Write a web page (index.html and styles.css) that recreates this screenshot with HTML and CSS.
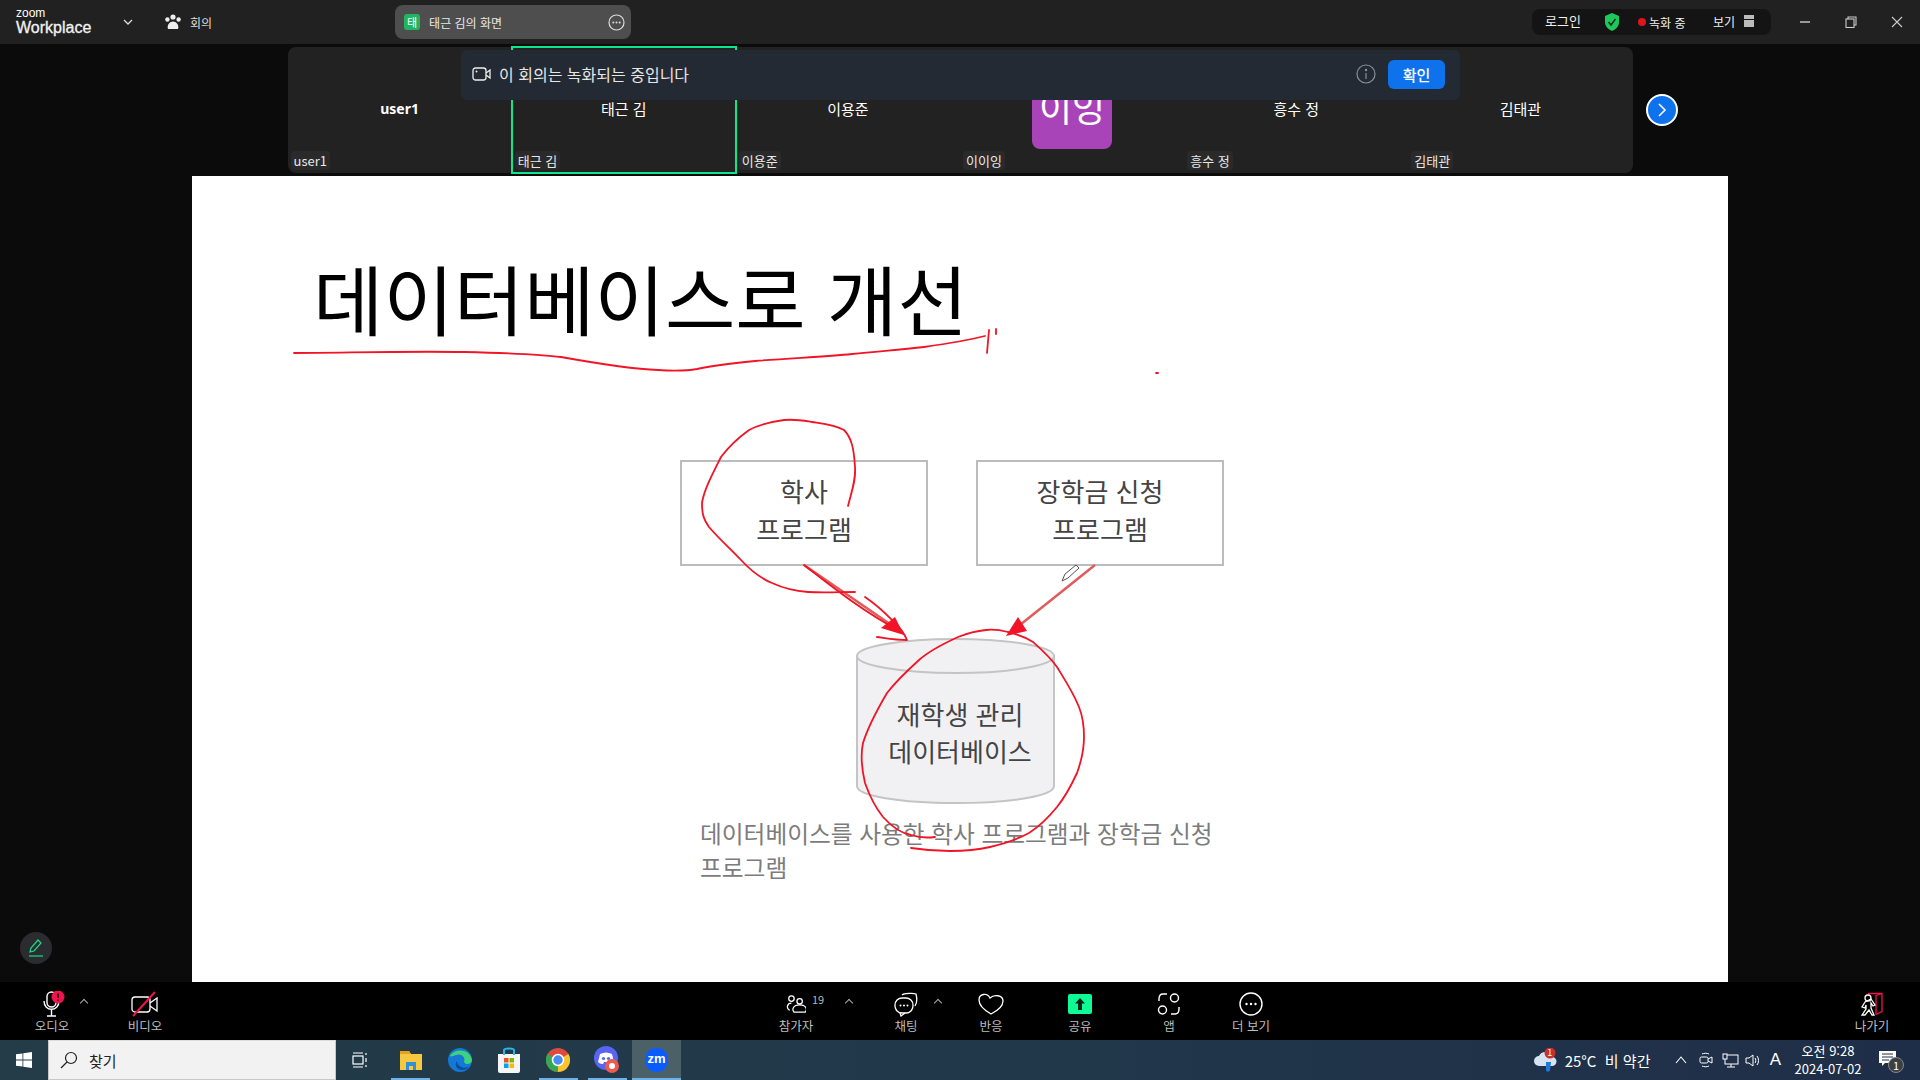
FILE: index.html
```html
<!DOCTYPE html>
<html lang="ko">
<head>
    <meta charset="UTF-8">
    <meta name="viewport" content="width=device-width, initial-scale=1.0">
    <title>Zoom Workplace - 회의</title>
    <link rel="stylesheet" href="styles.css">
</head>
<body>
    <header class="topbar">
        <div class="logo">
            <span class="logo-small">zoom</span>
            <span class="logo-big">Workplace</span>
        </div>
        <svg class="logo-chevron" width="10" height="6" viewBox="0 0 10 6"><path d="M1 1l4 4 4-4" fill="none" stroke="#ddd" stroke-width="1.3"/></svg>
        <div class="meeting">
            <svg width="18" height="16" viewBox="0 0 18 16" fill="#eee"><circle cx="9" cy="3" r="2.6"/><circle cx="3.4" cy="5.5" r="2.2"/><circle cx="14.6" cy="5.5" r="2.2"/><path d="M4 15c-1.5-4 2-7.5 5-7.5s6.500 3.500 5 7.500z"/></svg>
            <span>회의</span>
        </div>
        <div class="share-tab">
            <span class="share-badge">태</span>
            <span class="share-name">태근 김의 화면</span>
            <svg width="17" height="17" viewBox="0 0 17 17"><circle cx="8.500" cy="8.500" r="7.500" fill="none" stroke="#ddd" stroke-width="1.2"/><circle cx="5.300" cy="8.500" r="1" fill="#ddd"/><circle cx="8.500" cy="8.500" r="1" fill="#ddd"/><circle cx="11.700" cy="8.500" r="1" fill="#ddd"/></svg>
        </div>
        <div class="status-pill">
            <span class="status-login">로그인</span>
            <svg width="18" height="20" viewBox="0 0 18 20"><path d="M9 1l7 3v6c0 4-3 7.500-7 9-4-1.500-7-5-7-9V4z" fill="#1ec95c"/><path d="M5.500 10l2.500 3 4.500-6" fill="none" stroke="#10301c" stroke-width="1.600"/></svg>
            <span class="status-rec"><i class="rec-dot"></i>녹화 중</span>
            <span class="status-view">보기
                <svg width="12" height="12" viewBox="0 0 12 12" fill="#bbb"><rect x="1" y="0" width="10" height="4"/><rect x="1" y="5" width="10" height="7"/></svg>
            </span>
        </div>
        <div class="win-controls">
            <svg width="12" height="12" viewBox="0 0 12 12"><path d="M1 6h10" stroke="#ccc" stroke-width="1.400"/></svg>
            <svg width="12" height="12" viewBox="0 0 12 12" fill="none" stroke="#ccc" stroke-width="1.100"><rect x="1" y="3" width="8" height="8.500"/><path d="M3 3V1h8v8H9"/></svg>
            <svg width="12" height="12" viewBox="0 0 12 12"><path d="M1 1l10 10M11 1L1 11" stroke="#ccc" stroke-width="1.100"/></svg>
        </div>
    </header>

    <main class="stage">
        <section class="filmstrip">
            <div class="tile tile-me"><span class="tile-name">user1</span><span class="tile-label">user1</span></div>
            <div class="tile tile-active"><span class="tile-name">태근 김</span><span class="tile-label">태근 김</span></div>
            <div class="tile"><span class="tile-name">이용준</span><span class="tile-label">이용준</span></div>
            <div class="tile"><div class="avatar">이잉</div><span class="tile-label">이이잉</span></div>
            <div class="tile"><span class="tile-name">흥수 정</span><span class="tile-label">흥수 정</span></div>
            <div class="tile"><span class="tile-name">김태관</span><span class="tile-label">김태관</span></div>
        </section>

        <div class="notice">
            <svg width="20" height="14" viewBox="0 0 20 14" fill="none" stroke="#eee" stroke-width="1.300"><rect x="1" y="1" width="13" height="12" rx="2.500"/><circle cx="4.500" cy="4.500" r="1" fill="#eee" stroke="none"/><path d="M14 6l4-3v8l-4-3"/></svg>
            <span class="notice-text">이 회의는 녹화되는 중입니다</span>
            <svg class="notice-info" width="20" height="20" viewBox="0 0 20 20" fill="none" stroke="#8b8f96" stroke-width="1.200"><circle cx="10" cy="10" r="9"/><path d="M10 9v6"/><circle cx="10" cy="6" r=".6"/></svg>
            <button class="notice-btn">확인</button>
        </div>

        <button class="next-btn">
            <svg width="12" height="16" viewBox="0 0 12 16"><path d="M3 2l6 6-6 6" fill="none" stroke="#fff" stroke-width="1.600"/></svg>
        </button>

        <section class="slide">
            <h1 class="slide-title">데이터베이스로 개선</h1>
            <svg class="slide-canvas" viewBox="192 176 1536 806">
                <rect class="d-box" x="681" y="461" width="246" height="104"/>
                <rect class="d-box" x="977" y="461" width="246" height="104"/>
                <text class="d-text" x="804" y="502">학사</text>
                <text class="d-text" x="804" y="540">프로그램</text>
                <text class="d-text" x="1100" y="502">장학금 신청</text>
                <text class="d-text" x="1100" y="540">프로그램</text>

                <path class="d-arrow" d="M804 565L903 633"/>
                <path class="d-arrow" d="M1095 565L1010 633"/>

                <path class="d-cyl" d="M857 656V786C857 796 900 803 955.500 803S1054 796 1054 786V656"/>
                <ellipse class="d-cyl" cx="955.500" cy="656" rx="98.500" ry="17"/>
                <text class="d-text" x="960" y="725">재학생 관리</text>
                <text class="d-text" x="960" y="762">데이터베이스</text>
                <text class="d-caption" x="700" y="843">데이터베이스를 사용한 학사 프로그램과 장학금 신청</text>
                <text class="d-caption" x="700" y="877">프로그램</text>

                <!-- pen marks -->
                <path class="ink" d="M294 353C340 353 400 351 464 352C510 353 540 354 561 357C600 364 630 369 658 370C675 371 685 371 697 369C715 365 735 363 755 361C790 358 825 357 852 354C880 351 900 350 924 347C945 344 965 341 985 336"/>
                <path class="ink" d="M989 330L987 353M996 329V334M1156 373h2"/>
                <path class="ink" d="M848 506C852 490 856 480 855 467C854 450 852 438 844 430C835 425 825 424 812 422C800 420 795 419 784 420C770 422 760 424 749 430C738 438 730 445 721 457C712 475 704 490 702 503C702 515 704 520 709 527C720 540 730 548 741 560C752 572 760 578 772 583C785 589 795 591 808 592C825 593 840 592 855 592"/>
                <path class="ink" d="M804 565C830 585 860 610 903 633M865 597C880 607 890 618 895 623C900 628 905 635 907 640M877 637C885 638 895 640 907 640"/>
                <path class="ink-fill" d="M881 628L895 617L904 635Z"/>
                <path class="ink" d="M1008 632C1000 630 995 629 986 630C975 631 968 633 958 637C945 643 930 650 919 660C908 670 897 680 887 693C877 710 868 727 863 743C860 757 862 770 865 783C870 797 875 807 883 817C892 827 900 833 911 835C920 838 927 838 935 837"/>
                <path class="ink" d="M1008 632C1020 635 1025 637 1033 642C1042 650 1050 657 1057 667C1065 680 1073 692 1079 707C1083 717 1084 727 1084 737C1084 750 1081 762 1077 773C1071 786 1065 797 1057 807C1048 818 1040 826 1029 833C1016 840 1003 844 990 847C977 850 963 851 950 851C937 851 924 850 911 848"/>
                <path class="ink-fill" d="M1006 636L1018 617L1027 631Z"/>

                <!-- annotate cursor -->
                <path d="M1062 581L1065 574L1076 565L1079 568L1068 578Z" fill="#fff" stroke="#555" stroke-width="1"/>
            </svg>
        </section>

        <button class="pen-btn">
            <svg width="18" height="20" viewBox="0 0 18 20" fill="none" stroke="#1ed98a" stroke-width="1.200"><path d="M3 14l1-4 7-8 3 3-7 8z"/><path d="M2 18h14"/></svg>
        </button>
    </main>

    <footer class="toolbar">
        <div class="tools-left">
            <div class="tool">
                <svg class="tool-icon" width="32" height="26" viewBox="0 0 32 26" fill="none" stroke="#fff" stroke-width="1.400">
                    <rect x="11" y="1" width="9" height="15" rx="4.500"/>
                    <path d="M8 10c0 11 15 11 15 0M15.500 19v6M11 25h9"/>
                    <circle cx="22" cy="6" r="6.500" fill="#f0134d" stroke="none"/>
                    <path d="M22 2.500v4.500M22 8.500v1.500" stroke="#111" stroke-width="1.600"/>
                </svg>
                <span class="tool-label">오디오</span>
                <span class="caret"></span>
            </div>
            <div class="tool">
                <svg class="tool-icon" width="30" height="26" viewBox="0 0 30 26" fill="none" stroke="#fff" stroke-width="1.300">
                    <rect x="2" y="6" width="18" height="15" rx="3"/>
                    <path d="M20 12l7-5v13l-7-5"/>
                    <path d="M3 25L25 1" stroke="#f0134d" stroke-width="2"/>
                </svg>
                <span class="tool-label">비디오</span>
            </div>
        </div>
        <div class="tools-center">
            <div class="tool">
                <svg class="tool-icon" width="20" height="20" viewBox="0 0 22 20" fill="none" stroke="#fff" stroke-width="1.400">
                    <circle cx="6" cy="4" r="3"/><circle cx="15" cy="7" r="3"/>
                    <path d="M4 17C0 15 1 9 6 9M9 19c-3-3-1-8 6-8s9 5 6 8z"/>
                </svg>
                <span class="tool-count">19</span>
                <span class="tool-label">참가자</span>
                <span class="caret caret-wide"></span>
            </div>
            <div class="tool">
                <svg class="tool-icon" width="24" height="24" viewBox="0 0 24 24" fill="none" stroke="#fff" stroke-width="1.300">
                    <path d="M8 3c2-2 12-2 14-1 1 4 1 9-1 12"/>
                    <rect x="1" y="6" width="18" height="15" rx="7"/>
                    <path d="M6 21l1 3 4-3"/>
                    <circle cx="6.500" cy="13.500" r="1" fill="#fff" stroke="none"/><circle cx="10" cy="13.500" r="1" fill="#fff" stroke="none"/><circle cx="13.500" cy="13.500" r="1" fill="#fff" stroke="none"/>
                </svg>
                <span class="tool-label">채팅</span>
                <span class="caret caret-chat"></span>
            </div>
            <div class="tool">
                <svg class="tool-icon" width="26" height="22" viewBox="0 0 26 22" fill="none" stroke="#fff" stroke-width="1.300">
                    <path d="M13 21C6 17 1 13 1 7c0-6 8-8 11-2 4-4 13-3 13 3 0 6-6 10-12 13z"/>
                </svg>
                <span class="tool-label">반응</span>
            </div>
            <div class="tool">
                <svg class="tool-icon" width="24" height="20" viewBox="0 0 24 20"><rect width="24" height="20" rx="2" fill="#0dfa95"/><path d="M12 4l5 5.500h-3V16h-4V9.500H7z" fill="#08251a"/></svg>
                <span class="tool-label">공유</span>
            </div>
            <div class="tool">
                <svg class="tool-icon" width="24" height="24" viewBox="0 0 24 24" fill="none" stroke="#fff" stroke-width="1.400">
                    <circle cx="17.500" cy="6" r="4"/><circle cx="5.500" cy="18" r="4"/>
                    <path d="M10 2H6C3 2 2 4 2 7v2M14 22h4c3 0 4-2 4-5v-2"/>
                </svg>
                <span class="tool-label">앱</span>
            </div>
            <div class="tool">
                <svg class="tool-icon" width="24" height="24" viewBox="0 0 24 24" fill="none" stroke="#fff" stroke-width="1.400">
                    <circle cx="12" cy="12" r="11"/>
                    <circle cx="7.500" cy="12" r="1.200" fill="#fff" stroke="none"/><circle cx="12" cy="12" r="1.200" fill="#fff" stroke="none"/><circle cx="16.500" cy="12" r="1.200" fill="#fff" stroke="none"/>
                </svg>
                <span class="tool-label">더 보기</span>
            </div>
        </div>
        <div class="tools-right">
            <div class="tool">
                <svg class="tool-icon" width="24" height="24" viewBox="0 0 24 24" fill="none" stroke="#fff" stroke-width="1.300">
                    <path d="M8 1.500h14v18l-6 3" stroke="#f0134d"/>
                    <path d="M16 22.500V3.500l6-2" stroke="#f0134d"/>
                    <circle cx="8" cy="6" r="3"/>
                    <path d="M5 10l-3 5 3 1 1-3v4l-4 6h3l4-5 3 5h2l-3-7v-5l2 3 2-1-4-6z"/>
                </svg>
                <span class="tool-label">나가기</span>
            </div>
        </div>
    </footer>

    <footer class="taskbar">
        <div class="start">
            <svg width="16" height="16" viewBox="0 0 16 16" fill="#fff"><path d="M0 2.300l6.500-.9v6.200H0zM7.300 1.300L16 0v7.600H7.300zM0 8.400h6.500v6.200L0 13.700zM7.300 8.400H16V16l-8.700-1.200z"/></svg>
        </div>
        <div class="search">
            <svg width="18" height="18" viewBox="0 0 18 18" fill="none" stroke="#222" stroke-width="1.200"><circle cx="11" cy="7" r="5.500"/><path d="M7 11l-6 6"/></svg>
            <span>찾기</span>
        </div>
        <div class="task-view">
            <svg width="16" height="18" viewBox="0 0 16 18" fill="none" stroke="#fff" stroke-width="1.200"><rect x="1" y="5" width="10" height="8"/><path d="M1 2h10M1 16h10M14 2v2M14 7v4M14 14v2"/></svg>
        </div>
        <div class="apps">
            <div class="app app-open">
                <svg width="22" height="20" viewBox="0 0 22 20"><path d="M0 1h9l2 3h11v16H0z" fill="#f6c83f"/><path d="M0 1h9l2 3H0z" fill="#e3a21a"/><path d="M6 12h10v8H6z" fill="#2f8fd8"/><path d="M9 16h4v4H9z" fill="#f6c83f"/></svg>
            </div>
            <div class="app">
                <svg width="24" height="24" viewBox="0 0 24 24"><circle cx="12" cy="12" r="12" fill="#1378d6"/><path d="M2 8C6 0 22 0 24 12c0 5-7 5-8 2 2-5-3-9-8-7-3 1-5 2-6 1z" fill="#3fd27e"/><path d="M9 13c-3 4 0 9 5 9 3 0 5-1 7-3-5 2-12 0-12-6z" fill="#0c4d9c"/></svg>
            </div>
            <div class="app">
                <svg width="24" height="26" viewBox="0 0 24 26"><path d="M1 7h22v17a2 2 0 0 1-2 2H3a2 2 0 0 1-2-2z" fill="#f5f5f5"/><path d="M7 8V3c0-2 10-2 10 0v5" fill="none" stroke="#29b6e8" stroke-width="2"/><rect x="7" y="11" width="4.500" height="4.500" fill="#f25022"/><rect x="12.500" y="11" width="4.500" height="4.500" fill="#7fba00"/><rect x="7" y="16.500" width="4.500" height="4.500" fill="#00a4ef"/><rect x="12.500" y="16.500" width="4.500" height="4.500" fill="#ffb900"/></svg>
            </div>
            <div class="app app-open">
                <svg width="24" height="24" viewBox="0 0 24 24"><circle cx="12" cy="12" r="12" fill="#dd4b3e"/><path d="M12 12L22.400 6A12 12 0 0 1 12 24z" fill="#f7c52d"/><path d="M12 12L12 24A12 12 0 0 1 1.600 6z" fill="#34a853"/><circle cx="12" cy="12" r="5.500" fill="#4a8cf0" stroke="#fff" stroke-width="1.500"/></svg>
            </div>
            <div class="app app-open">
                <svg width="26" height="28" viewBox="0 0 26 28"><circle cx="12" cy="12" r="12" fill="#5865f2"/><path d="M6 8c4-2 8-2 12 0l2 8c-2 2-4 2-5 2l-1-2h-4l-1 2c-1 0-3 0-5-2z" fill="#fff"/><circle cx="9.500" cy="12.500" r="1.600" fill="#5865f2"/><circle cx="14.500" cy="12.500" r="1.600" fill="#5865f2"/><circle cx="18" cy="20" r="7" fill="#ec5a50"/><circle cx="18" cy="20" r="3" fill="#fff"/></svg>
            </div>
            <div class="app app-open app-active">
                <svg width="23" height="24" viewBox="0 0 23 24"><rect width="23" height="24" rx="11" fill="#0b5cff"/></svg>
                <span class="zoom-mark">zm</span>
            </div>
        </div>
        <div class="tray">
            <div class="weather">
                <svg width="24" height="24" viewBox="0 0 24 24"><path d="M6 18a5 5 0 0 1 0-10 7 7 0 0 1 13 1 4.500 4.500 0 0 1 0 9z" fill="#d6e4f2"/><path d="M13 14h5l-1 8c0 2-4 2-4 0z" fill="#1f7ae0"/><circle cx="17" cy="5" r="5.500" fill="#c9302c"/></svg>
                <span class="weather-badge">1</span>
            </div>
            <span class="weather-text">25°C&nbsp; 비 약간</span>
            <svg class="tray-chevron" width="12" height="8" viewBox="0 0 12 8"><path d="M1 7l5-6 5 6" fill="none" stroke="#fff" stroke-width="1.100"/></svg>
            <svg width="14" height="16" viewBox="0 0 14 16" fill="none" stroke="#fff" stroke-width="1"><path d="M3 2c2-1 5-1 7 0M3 14c2 1 5 1 7 0"/><rect x="1" y="5" width="8" height="6" rx="1.500"/><path d="M9 7l4-2v6l-4-2"/></svg>
            <svg width="17" height="15" viewBox="0 0 17 15" fill="none" stroke="#fff" stroke-width="1"><rect x="3" y="2" width="13" height="9"/><rect x="1" y="1" width="4" height="5" fill="#1f2e48"/><path d="M9 11v3M5 14h8"/></svg>
            <svg class="tray-speaker" width="16" height="15" viewBox="0 0 16 15" fill="none" stroke="#fff" stroke-width="1"><path d="M1 5h3l4-3v11l-4-3H1z"/><path d="M10 5c1 1 1 4 0 5M12 3c2 2 2 7 0 9"/></svg>
            <span class="ime">A</span>
            <div class="clock"><span>오전 9:28</span><span>2024-07-02</span></div>
            <div class="notify">
                <svg width="18" height="18" viewBox="0 0 18 18"><path d="M0 0h17v12H6l-3 3v-3H0z" fill="#fff"/><path d="M3 3h11M3 6h11M3 9h7" stroke="#1f2e48" stroke-width="1"/></svg>
                <span class="notify-count">1</span>
            </div>
        </div>
    </footer>
</body>
</html>
```
FILE: styles.css
```css
* {
    box-sizing: border-box;
}
body {
    font-family: 'Noto Sans CJK KR', 'Noto Sans', sans-serif;
    margin: 0;
    width: 1920px;
    height: 1080px;
    overflow: hidden;
    display: flex;
    flex-direction: column;
    background: #0b0b0b;
    color: #fff;
}
svg {
    display: block;
    flex: none;
}
button {
    border: none;
    padding: 0;
    font-family: inherit;
}

/* top bar */
.topbar {
    height: 44px;
    flex: none;
    background: #212121;
    display: flex;
    align-items: center;
}
.logo {
    margin-left: 16px;
    width: 107px;
    display: flex;
    flex-direction: column;
    font-family: 'Liberation Sans', sans-serif;
    line-height: 13px;
}
.logo-small {
    font-size: 12px;
    line-height: 11px;
}
.logo-big {
    font-size: 16px;
    line-height: 17px;
    color: #f2f2f2;
    -webkit-text-stroke: 0.3px #f2f2f2;
}
.meeting {
    margin-left: 31px;
    display: flex;
    align-items: center;
    gap: 8px;
    font-size: 12px;
    color: #ddd;
}
.share-tab {
    margin-left: 183px;
    width: 236px;
    height: 34px;
    background: #4e4e4e;
    border-radius: 8px;
    display: flex;
    align-items: center;
    padding: 0 6px 0 9px;
    font-size: 12px;
    color: #e8e8e8;
}
.share-badge {
    width: 16px;
    height: 16px;
    border-radius: 3px;
    background: #20b463;
    color: #fff;
    font-size: 11px;
    line-height: 16px;
    text-align: center;
}
.share-name {
    margin-left: 9px;
    flex: 1;
}
.status-pill {
    margin-left: auto;
    width: 239px;
    height: 26px;
    background: #141414;
    border-radius: 8px;
    display: flex;
    align-items: center;
    padding-left: 13px;
    font-size: 13px;
    color: #f0f0f0;
}
.status-login {
    width: 58px;
    margin-top: -4px;
}
.status-rec {
    margin-left: 17px;
    width: 75px;
    display: flex;
    align-items: center;
    gap: 3px;
    font-size: 12px;
}
.rec-dot {
    width: 8px;
    height: 8px;
    border-radius: 50%;
    background: #e0141b;
}
.status-view {
    display: flex;
    align-items: center;
    gap: 8px;
    margin-top: -2px;
    font-size: 12px;
}
.win-controls {
    margin-left: 28px;
    margin-right: 17px;
    display: flex;
    gap: 34px;
}

/* meeting area */
.stage {
    position: relative;
    flex: 1;
    display: flex;
    flex-direction: column;
    align-items: center;
    padding-top: 3px;
    gap: 3px;
    min-height: 0;
}
.filmstrip {
    width: 1345px;
    height: 126px;
    flex: none;
    background: #222;
    border-radius: 8px;
    display: flex;
}
.tile {
    position: relative;
    flex: 1;
    display: flex;
    align-items: center;
    justify-content: center;
    padding-bottom: 4px;
    font-size: 15px;
}
.tile-me .tile-name {
    font-weight: bold;
    font-family: 'Noto Sans', sans-serif;
    font-size: 14px;
}
.tile-active {
    outline: 2px solid #0ce68c;
    outline-offset: -1px;
}
.tile-label {
    position: absolute;
    left: 3px;
    bottom: 3px;
    height: 19px;
    padding: 0 3px;
    background: #2a2a2a;
    border-radius: 4px;
    font-size: 13px;
    line-height: 19px;
    color: #e8e8e8;
}
.avatar {
    width: 80px;
    height: 82px;
    margin-top: 0;
    background: #a844b8;
    border-radius: 8px;
    font-size: 36px;
    line-height: 78px;
    text-align: center;
}
.notice {
    position: absolute;
    left: 461px;
    top: 6px;
    width: 999px;
    height: 50px;
    background: #242a33;
    border-radius: 6px;
    display: flex;
    align-items: center;
    padding: 0 15px 2px 11px;
    font-size: 16px;
    color: #e6e6e6;
}
.notice-text {
    margin-left: 7px;
    flex: 1;
}
.notice-btn {
    margin-left: 12px;
    width: 57px;
    height: 29px;
    background: #0e72ed;
    color: #fff;
    border-radius: 6px;
    font-size: 15px;
    font-weight: 500;
}
.next-btn {
    position: absolute;
    left: 1646px;
    top: 50px;
    width: 32px;
    height: 32px;
    border-radius: 50%;
    background: #0e72ed;
    border: 2px solid #fff;
    display: flex;
    align-items: center;
    justify-content: center;
}
.slide {
    position: relative;
    width: 1536px;
    flex: 1;
    background: #fff;
    padding: 76px 0 0 121px;
}
.slide-title {
    margin: 0;
    font-size: 76.500px;
    font-weight: 400;
    line-height: 90px;
    color: #000;
}
.slide-canvas {
    position: absolute;
    left: 0;
    top: 0;
    width: 1536px;
    height: 806px;
}
.d-box {
    fill: #fff;
    stroke: #bcbcbc;
    stroke-width: 2;
}
.d-cyl {
    fill: #f1f1f3;
    stroke: #c4c4c4;
    stroke-width: 2;
}
.d-text {
    font-size: 26px;
    fill: #444;
    text-anchor: middle;
}
.d-caption {
    font-size: 23.700px;
    fill: #7c7c7c;
}
.d-arrow {
    fill: none;
    stroke: #e05c5c;
    stroke-width: 2.500;
}
.ink {
    fill: none;
    stroke: #f01426;
    stroke-width: 1.800;
    stroke-linecap: round;
}
.ink-fill {
    fill: #f01426;
}
.pen-btn {
    position: absolute;
    left: 20px;
    top: 888px;
    width: 32px;
    height: 32px;
    border-radius: 50%;
    background: #2a2c2f;
    display: flex;
    align-items: center;
    justify-content: center;
}

/* bottom toolbar */
.toolbar {
    height: 58px;
    flex: none;
    background: #000;
    display: flex;
}
.tools-left {
    width: 741px;
    padding-left: 16px;
    display: flex;
    gap: 21px;
}
.tools-left .tool {
    width: 72px;
}
.tools-center {
    display: grid;
    grid-template-columns: 110px 110px 60px 118px 60px 104px;
}
.tools-right {
    margin-left: auto;
    width: 96px;
}
.tool {
    position: relative;
    height: 58px;
    display: flex;
    flex-direction: column;
    align-items: center;
}
.tool-icon {
    height: 26px;
    margin-top: 9px;
}
.tool-label {
    position: absolute;
    left: 0;
    right: 0;
    top: 35px;
    text-align: center;
    font-size: 12.500px;
    line-height: 18px;
    color: #bdbdbd;
}
.tool-count {
    position: absolute;
    left: 71px;
    top: 10px;
    font-size: 11px;
    line-height: 14px;
    color: #b5b5b5;
}
.caret {
    position: absolute;
    left: 65px;
    top: 18px;
    width: 6px;
    height: 6px;
    border-left: 1.500px solid #aaa;
    border-top: 1.500px solid #aaa;
    transform: rotate(45deg);
}
.caret-wide {
    left: 105px;
}
.caret-chat {
    left: 84px;
}

/* windows taskbar */
.taskbar {
    height: 40px;
    flex: none;
    background: linear-gradient(90deg, #233c47, #21384a 50%, #1f2e48);
    display: flex;
    align-items: center;
}
.start {
    width: 48px;
    height: 40px;
    display: flex;
    align-items: center;
    justify-content: center;
}
.search {
    width: 288px;
    height: 40px;
    background: #f2f2f2;
    border: 1px solid #c8c8c8;
    border-top-color: #ddd;
    display: flex;
    align-items: center;
    gap: 11px;
    padding-left: 11px;
    font-size: 15px;
    color: #222;
}
.task-view {
    width: 48px;
    display: flex;
    justify-content: center;
}
.apps {
    display: flex;
    margin-left: 2px;
}
.app {
    position: relative;
    width: 49.200px;
    height: 40px;
    display: flex;
    align-items: center;
    justify-content: center;
}
.app-open::after {
    content: '';
    position: absolute;
    left: 5px;
    right: 5px;
    bottom: 0;
    height: 2px;
    background: #6db3e8;
}
.app-active {
    background: #4c6068;
}
.app-active::after {
    left: 0;
    right: 0;
}
.zoom-mark {
    position: absolute;
    left: 0;
    right: 0;
    top: 10px;
    text-align: center;
    font-family: 'Liberation Sans', sans-serif;
    font-weight: bold;
    font-size: 13px;
    line-height: 18px;
}
.tray {
    margin-left: auto;
    display: flex;
    align-items: center;
    color: #fff;
}
.weather {
    position: relative;
    margin-right: 8px;
}
.weather-badge {
    position: absolute;
    left: 12px;
    top: -1px;
    width: 10px;
    text-align: center;
    font-size: 9px;
    line-height: 12px;
}
.weather-text {
    font-size: 15px;
    width: 110px;
    white-space: nowrap;
}
.tray-chevron {
    margin-right: 3px;
}
.tray > svg + svg {
    margin-left: 9px;
}
.tray > .tray-speaker {
    margin-left: 6px;
}
.ime {
    margin-left: 9px;
    font-size: 17px;
    font-family: 'Liberation Sans', sans-serif;
}
.clock {
    width: 90px;
    margin-left: 2px;
    display: flex;
    flex-direction: column;
    align-items: center;
    font-size: 13px;
    line-height: 18px;
}
.notify {
    position: relative;
    width: 44px;
    height: 40px;
    margin-left: -7px;
    margin-right: 10px;
    display: flex;
    align-items: center;
    justify-content: center;
}
.notify-count {
    position: absolute;
    left: 22px;
    top: 17px;
    width: 16px;
    height: 16px;
    border-radius: 50%;
    background: #3a3f45;
    border: 1px solid #888;
    font-size: 11px;
    line-height: 14px;
    text-align: center;
}
```
